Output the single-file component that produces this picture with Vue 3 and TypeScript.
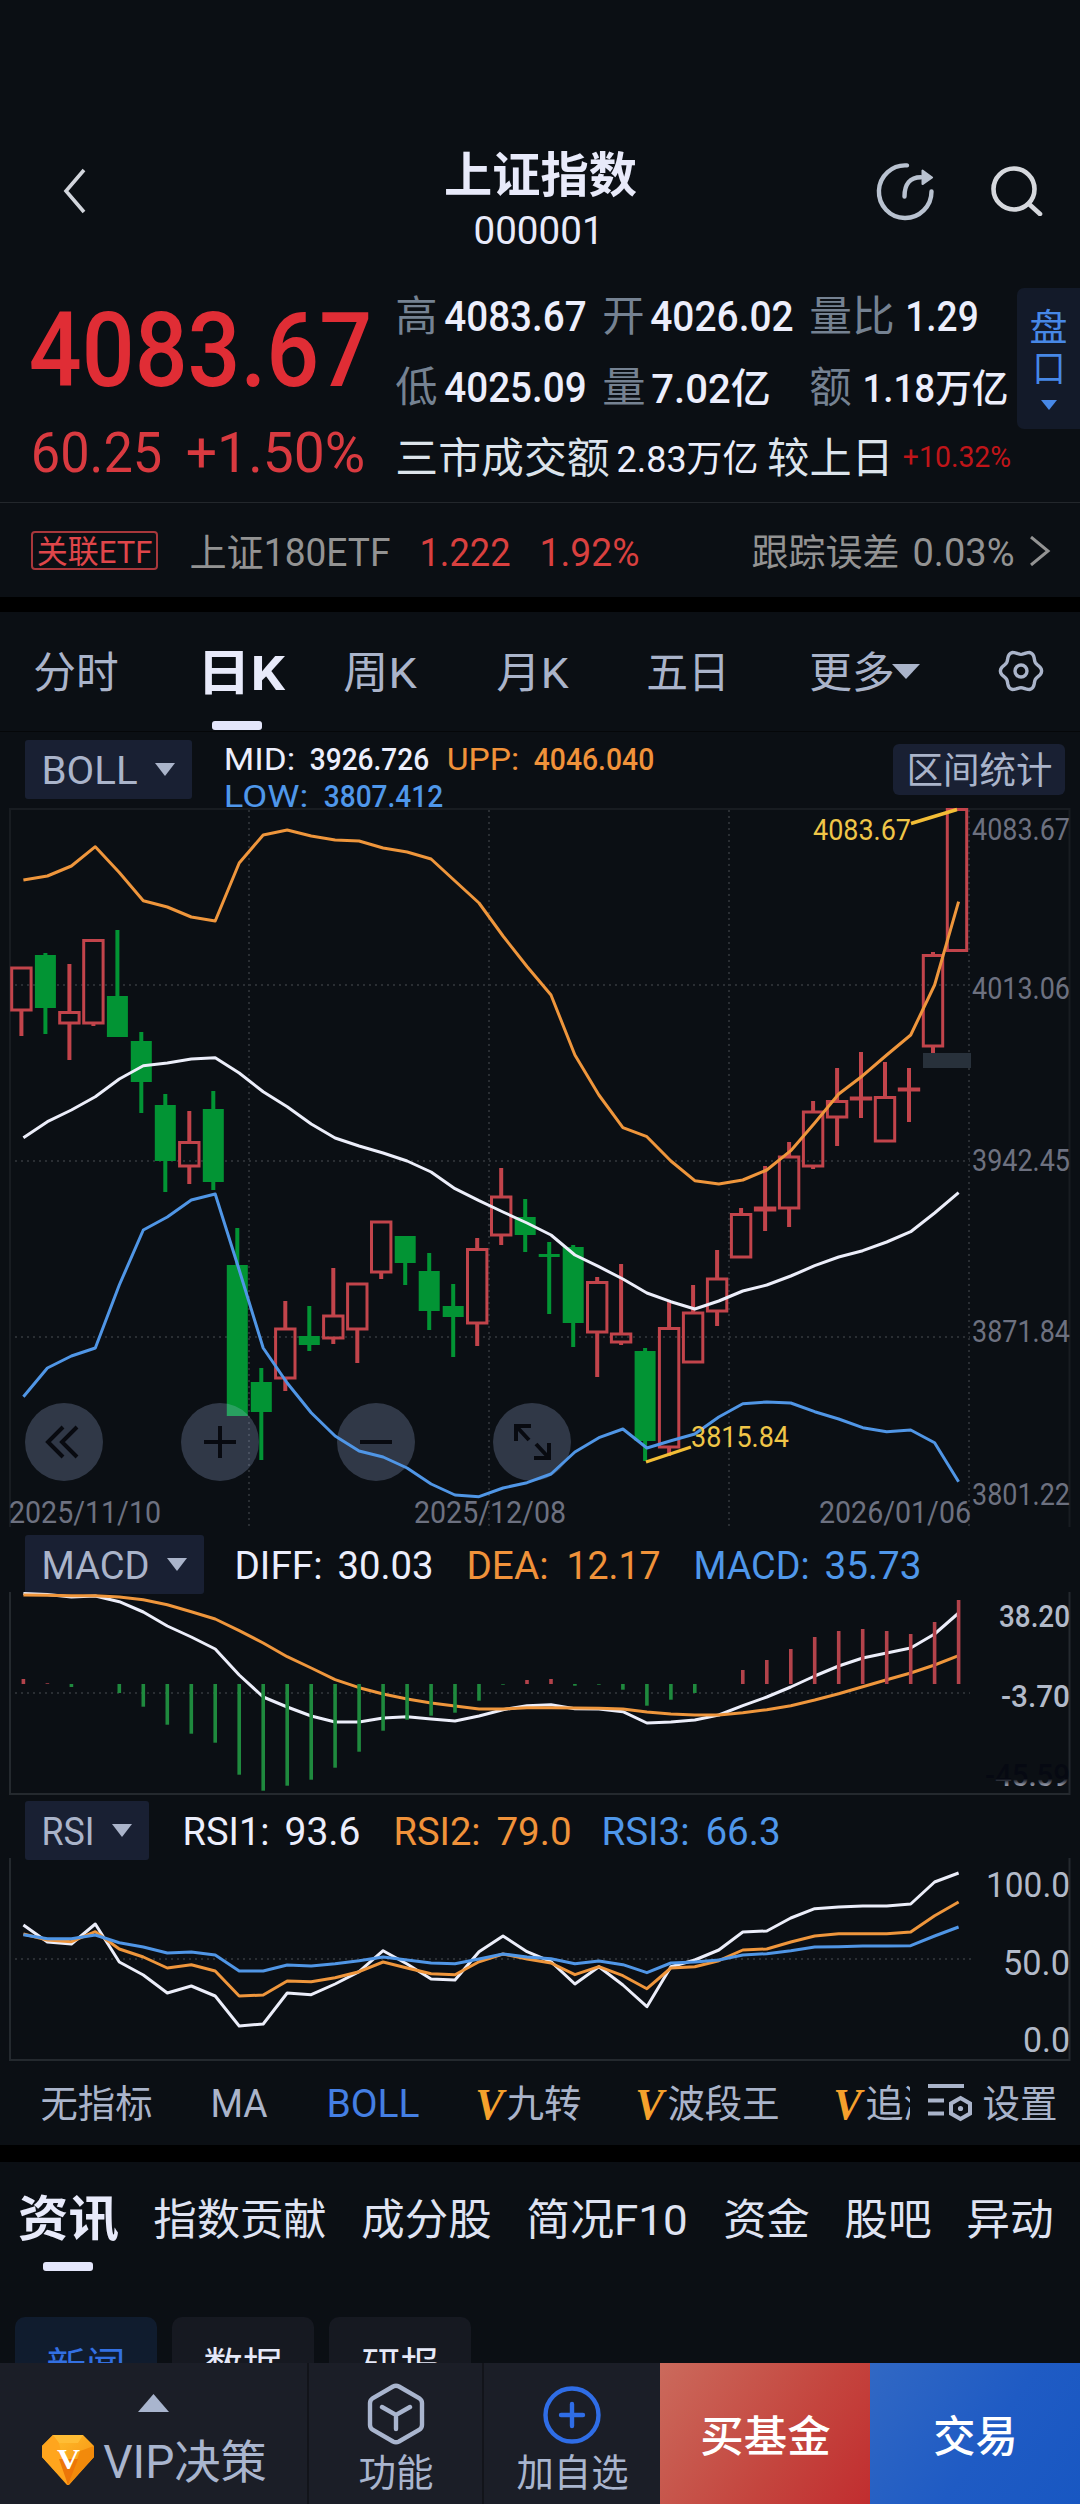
<script setup lang="ts">
import { h } from 'vue'

interface FitProps {
  t: string
  w: number
  s: number
  g?: number
  dy?: number
}

/* A run of text fitted to an exact width; the bottom of its box is the baseline. */
const Fit = (p: FitProps) => {
  const g = Number(p.g ?? 0)
  const w = Number(p.w)
  const s = Number(p.s)
  const height = Math.round(s * 0.8)
  return h('svg', { class: 'fit', width: g + w, height }, [
    h(
      'text',
      {
        x: g - s * 0.04,
        y: height + Number(p.dy ?? 0),
        'font-size': s,
        textLength: w + s * 0.08,
        lengthAdjust: 'spacingAndGlyphs',
        fill: 'currentColor',
      },
      p.t,
    ),
  ])
}
Fit.props = ['t', 'w', 's', 'g', 'dy']

const cx = (i: number) => +(21.4 + 23.99 * i).toFixed(1)
const lx = (i: number) => +(23.4 + 23.98 * i).toFixed(1)
const line = (ys: number[]) => ys.map((y, i) => `${lx(i)},${y}`).join(' ')

type Candle = [up: number, high: number, top: number, bottom: number, low: number]
const candles: Candle[] = [
  [1, 968, 968, 1010, 1036], [0, 953, 955, 1008, 1034], [1, 964, 1012.5, 1023, 1060], [1, 940, 940.5, 1023, 1026],
  [0, 930, 996, 1037, 1037], [0, 1032, 1041, 1082, 1113], [0, 1094, 1105, 1161, 1192], [1, 1111, 1142.5, 1166, 1184],
  [0, 1091, 1109, 1182, 1190], [0, 1228, 1265, 1416, 1416], [0, 1368, 1382, 1412, 1460], [1, 1301, 1329, 1378, 1391],
  [0, 1306, 1336, 1345, 1351], [1, 1268, 1316, 1338, 1344], [1, 1284, 1284, 1329, 1363], [1, 1222, 1222, 1272, 1279],
  [0, 1236, 1236, 1263, 1285], [0, 1253, 1271, 1311, 1330], [0, 1284, 1306, 1317, 1357], [1, 1238, 1249.5, 1323, 1346],
  [1, 1168, 1197, 1235, 1245], [0, 1199, 1217, 1235, 1252], [0, 1242, 1254, 1257, 1314], [0, 1245, 1247, 1323, 1347],
  [1, 1277, 1282.5, 1332, 1377], [1, 1264, 1334, 1342, 1345], [0, 1348, 1351, 1441, 1461], [1, 1300, 1328.5, 1447, 1456],
  [1, 1285, 1313, 1362, 1362], [1, 1250, 1279, 1311, 1326], [1, 1208, 1214.5, 1257, 1257], [1, 1166, 1208, 1210, 1231],
  [1, 1142, 1157, 1208, 1227], [1, 1101, 1112, 1166, 1169], [1, 1068, 1101.5, 1117, 1146], [1, 1052, 1098, 1099, 1118],
  [1, 1062, 1097.5, 1141, 1141], [1, 1068, 1089, 1090, 1122], [1, 952, 955.5, 1046, 1053], [1, 809, 809.5, 950.5, 951],
]

const upp = line([
  880, 876, 866, 846.7, 872.5, 900.7, 907, 917, 921, 863, 835, 830, 836, 840, 841, 848, 852, 859, 881, 903,
  936, 966.5, 995, 1055, 1095, 1127.7, 1136.7, 1161, 1180.7, 1184, 1180, 1170, 1150.7, 1123, 1094, 1075.7, 1055, 1035, 985, 901.7,
])
const mid = line([
  1137.7, 1121.7, 1110, 1096.7, 1079, 1065.7, 1063, 1059, 1057.7, 1073, 1091.7, 1106.7, 1124, 1138, 1146, 1153, 1161, 1172, 1188.7, 1200.7,
  1212, 1223, 1235, 1255, 1266.7, 1279, 1293, 1301.7, 1309, 1301, 1291, 1285, 1276, 1265.7, 1257, 1250.7, 1242, 1231.7, 1213, 1192.7,
])
const low = line([
  1396.7, 1368, 1356, 1348, 1285, 1230, 1217, 1200, 1194, 1270, 1348, 1383, 1412.7, 1436, 1451, 1457, 1468, 1484, 1495, 1496.7,
  1488, 1482.7, 1474, 1452, 1437.7, 1429, 1448, 1440.7, 1434, 1417, 1403.7, 1402, 1403, 1411.7, 1419, 1427.7, 1431.7, 1430, 1442.7, 1481.7,
])
const diff = line([
  1593.5, 1594.5, 1597, 1596, 1601.7, 1612, 1626, 1637, 1649, 1675, 1697, 1707, 1716, 1722, 1722, 1718, 1716.7, 1719, 1721, 1716,
  1709.7, 1705.7, 1704.7, 1708.7, 1709, 1711.7, 1723, 1722, 1720, 1715, 1705.7, 1697, 1687, 1676, 1666, 1658, 1653, 1648, 1634, 1613,
])
const dea = line([
  1595, 1595.3, 1595.7, 1595.7, 1597, 1599.7, 1604.7, 1611.7, 1619, 1630.7, 1643, 1656.7, 1668, 1679.7, 1687.7, 1694, 1699, 1703, 1706, 1709,
  1709, 1707.7, 1707.7, 1708, 1708.3, 1709, 1712, 1714, 1715, 1715, 1712.7, 1709.7, 1705.7, 1700, 1693.7, 1686.7, 1679.7, 1673, 1665, 1655.7,
])
const rsi1 = line([
  1925, 1942, 1944, 1924, 1962, 1975, 1993, 1986, 1996, 2026, 2024, 1993, 1994.7, 1984, 1971.7, 1950.7, 1964, 1979, 1980, 1951.7,
  1936, 1951.7, 1961.7, 1984, 1966.7, 1985, 2006.7, 1966.7, 1960, 1950, 1932, 1931, 1918, 1908.7, 1907, 1906, 1906, 1904, 1882, 1873,
])
const rsi2 = line([
  1934, 1940, 1941.7, 1931.7, 1949, 1957, 1968, 1964.7, 1971, 1996, 1995, 1981, 1981.7, 1977.7, 1971.7, 1962, 1968, 1973.7, 1974.7, 1961.7,
  1954, 1959, 1963, 1974.7, 1966.7, 1975.7, 1988.7, 1968, 1966.7, 1960.7, 1950, 1949, 1942, 1936, 1933.7, 1933.7, 1933.7, 1932, 1915.7, 1902,
])
const rsi3 = line([
  1934.7, 1938.7, 1938.7, 1935, 1942.7, 1947, 1953, 1952, 1955, 1971, 1971, 1965, 1966, 1963.7, 1960.7, 1957, 1960, 1963, 1963.7, 1959,
  1954, 1957, 1958.7, 1963.7, 1961, 1964.7, 1972.7, 1963, 1962, 1960, 1955, 1953.7, 1950.7, 1947, 1946.7, 1946, 1946, 1945.7, 1936, 1927,
])

const zero = 1684
const bars = [
  1679, 1683.3, 1687, 1684, 1693, 1706.7, 1724.7, 1733.7, 1742.7, 1774.7, 1790.7, 1785.7, 1779.7, 1767.7, 1751.7, 1730.7, 1719.7, 1715.7, 1712.7, 1700.7,
  1684.7, 1680, 1679, 1685.7, 1684.7, 1689.7, 1705.7, 1699.7, 1693, 1684, 1670, 1660, 1649, 1637, 1631, 1629, 1631, 1634, 1622, 1600,
]

const scale = [
  { t: '4083.67', y: 840 },
  { t: '4013.06', y: 999 },
  { t: '3942.45', y: 1170.5 },
  { t: '3871.84', y: 1341.5 },
  { t: '3801.22', y: 1505 },
]
const dates = [
  { t: '2025/11/10', x: 9 },
  { t: '2025/12/08', x: 414 },
  { t: '2026/01/06', x: 819 },
]
const news = [
  { t: '指数贡献', w: 170, g: 38 },
  { t: '成分股', w: 127, g: 38 },
  { t: '简况F10', w: 158, g: 38 },
  { t: '资金', w: 83, g: 39 },
  { t: '股吧', w: 84, g: 38 },
  { t: '异动', w: 84, g: 38 },
]
const gear =
  Array.from({ length: 72 }, (_, i) => {
    const a = (i * Math.PI) / 36
    const r = 18.6 + 2 * Math.cos(6 * a)
    return `${i ? 'L' : 'M'}${(23 + r * Math.cos(a)).toFixed(2)} ${(23 + r * Math.sin(a)).toFixed(2)}`
  }).join('') + 'Z'
</script>

<template>
  <main class="page">
    <header class="top">
      <svg class="back" width="30" height="50" viewBox="0 0 30 50"><path d="M22 4 4 25 22 46" /></svg>
      <div class="title">
        <div class="line t1"><Fit t="上证指数" :w="189" :s="48" /></div>
        <div class="line t2"><Fit t="000001" :w="127" :s="39" :dy="1" /></div>
      </div>
      <svg class="share" width="60" height="60" viewBox="0 0 60 60">
        <path class="ring" d="M31 3.4A26.3 26.3 0 1 0 55.5 29.5" />
        <path class="ring" d="M28.5 34.5C28.5 22 34 15.2 45 15.2" />
        <path class="head" d="M46.5 8.5v13.6l9.6-6.6z" />
      </svg>
      <svg class="search" width="54" height="50" viewBox="0 0 54 50"><circle cx="24" cy="23" r="20.5" /><path d="m39 38 11 10" /></svg>
    </header>

    <section class="quote">
      <div class="price">
        <div class="line p1"><Fit t="4083.67" :w="335" :s="104" :dy="-1" /></div>
        <div class="line p2"><Fit t="60.25" :w="127" :s="56" /><Fit t="+1.50%" :w="175" :s="56" :g="28" /></div>
      </div>
      <div class="stats">
        <div class="line s1">
          <Fit class="k" t="高" :w="39" :s="42" /><Fit class="v" t="4083.67" :w="139" :s="43" :g="10" />
          <Fit class="k" t="开" :w="39" :s="42" :g="19" /><Fit class="v" t="4026.02" :w="140" :s="43" :g="9" />
          <Fit class="k" t="量比" :w="82" :s="42" :g="19" /><Fit class="v" t="1.29" :w="70" :s="43" :g="14" />
        </div>
        <div class="line s2">
          <Fit class="k" t="低" :w="39" :s="42" /><Fit class="v" t="4025.09" :w="139" :s="43" :g="10" />
          <Fit class="k" t="量" :w="40" :s="42" :g="19" /><Fit class="v" t="7.02亿" :w="116" :s="41" :g="9" :dy="1" />
          <Fit class="k" t="额" :w="39" :s="42" :g="42" /><Fit class="v" t="1.18万亿" :w="143" :s="39" :g="14" />
        </div>
        <div class="line s3">
          <Fit t="三市成交额" :w="211" :s="42" :dy="1" /><Fit class="v" t="2.83万亿" :w="139" :s="37" :g="10" />
          <Fit t="较上日" :w="123" :s="42" :g="12" :dy="1" /><Fit class="rise" t="+10.32%" :w="106" :s="29" :g="12" :dy="-5" />
        </div>
      </div>
      <aside class="side">
        <Fit t="盘" :w="35" :s="37" /><Fit t="口" :w="30" :s="37" />
        <svg width="16" height="10" viewBox="0 0 16 10"><path d="M0 0h16L8 10z" /></svg>
      </aside>
    </section>

    <section class="etf">
      <span class="badge"><Fit t="关联ETF" :w="113" :s="32" /></span>
      <Fit t="上证180ETF" :w="198" :s="38" /><Fit class="up" t="1.222" :w="88" :s="38" :g="32" /><Fit class="up" t="1.92%" :w="97" :s="38" :g="32" />
      <Fit class="right" t="跟踪误差" :w="145" :s="37" /><Fit t="0.03%" :w="99" :s="38" :g="16" />
      <svg class="go" width="22" height="30" viewBox="0 0 22 30"><path d="m2 1 17 14L2 29" /></svg>
    </section>
    <div class="band b1"></div>

    <nav class="periods">
      <Fit t="分时" :w="82" :s="43" />
      <div class="on"><Fit t="日K" :w="84" :s="49" :dy="2" /></div>
      <Fit t="周K" :w="70" :s="43" :g="62" /><Fit t="月K" :w="69" :s="43" :g="83" /><Fit t="五日" :w="80" :s="43" :g="81" />
      <Fit t="更多" :w="82" :s="43" :g="83" />
      <svg class="more" width="28" height="15" viewBox="0 0 28 15"><path d="M0 0h28L14 15z" /></svg>
      <svg class="gear" width="46" height="46" viewBox="0 0 46 46"><path :d="gear" /><circle cx="23" cy="23" r="6" /></svg>
    </nav>

    <div class="tools">
      <span class="drop boll"><Fit t="BOLL" :w="93" :s="39" /><i></i></span>
      <div class="legend">
        <div class="line l1">
          <Fit t="MID:" :w="69" :s="31" /><Fit class="num" t="3926.726" :w="117" :s="31" :g="17" />
          <Fit class="orange" t="UPP:" :w="70" :s="31" :g="20" /><Fit class="orange num" t="4046.040" :w="118" :s="31" :g="17" />
        </div>
        <div class="line l2 blue"><Fit t="LOW:" :w="82" :s="31" /><Fit class="num" t="3807.412" :w="117" :s="31" :g="18" /></div>
      </div>
      <span class="range"><Fit t="区间统计" :w="143" :s="37" /></span>
    </div>

    <svg class="chart" width="1080" height="722" viewBox="0 808 1080 722">
      <path class="frame" d="M10 1527V809H1069.5V1527" />
      <path class="grid" d="M15 985H970M15 1161H970M15 1337H970M249 810V1527M489 810V1527M729 810V1527M969 810V1527" />
      <rect x="923" y="1053" width="48" height="15" fill="#28313b" />
      <g class="axis">
        <text v-for="d in dates" :key="d.t" :x="d.x" y="1523" textLength="152" lengthAdjust="spacingAndGlyphs">{{ d.t }}</text>
        <text v-for="s in scale" :key="s.t" x="972" :y="s.y" textLength="98" lengthAdjust="spacingAndGlyphs">{{ s.t }}</text>
      </g>
      <g v-for="(c, i) in candles" :key="i" :class="c[0] ? 'r' : 'g'">
        <rect class="wick" :x="cx(i) - 2" :y="c[1]" width="4" :height="Math.max(0, c[2] - c[1])" />
        <rect class="wick" :x="cx(i) - 2" :y="c[3]" width="4" :height="Math.max(0, c[4] - c[3])" />
        <rect v-if="c[0]" class="body" :x="cx(i) - 9.7" :y="c[2]" width="19.4" :height="c[3] - c[2]" />
        <rect v-else class="body" :x="cx(i) - 10.5" :y="c[2]" width="21" :height="c[3] - c[2]" />
      </g>
      <g class="buttons">
        <circle v-for="x in [64, 220, 376, 532]" :key="x" :cx="x" cy="1442" r="39" />
      </g>
      <g class="plot">
        <polyline class="o" :points="upp" /><polyline class="w" :points="mid" /><polyline class="b" :points="low" />
      </g>
      <g class="glyph">
        <path d="M63 1427 48 1442 63 1457M77 1427 62 1442 77 1457M204 1442H236M220 1426V1458M360 1442H392" />
        <path d="M516 1441V1426H531M516 1426 529 1440M549 1443V1458H534M549 1458 536 1444" />
      </g>
      <g class="mark">
        <path d="M911 823.5 957 809.5M646 1462 691 1447" />
        <text x="813" y="840" textLength="98" lengthAdjust="spacingAndGlyphs">4083.67</text>
        <text x="691" y="1447" textLength="98" lengthAdjust="spacingAndGlyphs">3815.84</text>
      </g>
    </svg>

    <div class="bar macd">
      <span class="drop"><Fit t="MACD" :w="105" :s="39" /><i></i></span>
      <div class="vals">
        <Fit t="DIFF:" :w="85" :s="39" /><Fit t="30.03" :w="93" :s="39" :g="18" />
        <Fit class="orange" t="DEA:" :w="79" :s="39" :g="36" /><Fit class="orange" t="12.17" :w="91" :s="39" :g="21" />
        <Fit class="blue" t="MACD:" :w="113" :s="39" :g="36" /><Fit class="blue" t="35.73" :w="94" :s="39" :g="18" />
      </div>
    </div>
    <svg class="chart" width="1080" height="204" viewBox="0 1592 1080 204">
      <defs>
        <linearGradient id="fade" x1="0" y1="0" x2="0" y2="1">
          <stop offset="0.6" stop-color="#060912" /><stop offset="0.76" stop-color="#8d92a0" />
        </linearGradient>
      </defs>
      <path class="frame strong" d="M10 1592V1794H1069.5V1592" />
      <path class="grid" d="M15 1693H970" />
      <g class="plot"><polyline class="w" :points="diff" /><polyline class="o" :points="dea" /></g>
      <rect
        v-for="(y, i) in bars" :key="i" :x="lx(i) - 1.8" :y="Math.min(y, zero)" width="3.6" :height="Math.abs(y - zero)"
        :fill="y < zero ? '#b3434b' : '#1f8a3e'"
      />
      <g class="axis light">
        <text x="999" y="1627" textLength="71" lengthAdjust="spacingAndGlyphs">38.20</text>
        <text x="1001" y="1707" textLength="69" lengthAdjust="spacingAndGlyphs">-3.70</text>
        <text class="faded" x="985" y="1786" textLength="85" lengthAdjust="spacingAndGlyphs">-45.59</text>
      </g>
    </svg>

    <div class="bar rsi">
      <span class="drop"><Fit t="RSI" :w="50" :s="39" /><i></i></span>
      <div class="vals">
        <Fit t="RSI1:" :w="84" :s="39" /><Fit t="93.6" :w="73" :s="39" :g="18" />
        <Fit class="orange" t="RSI2:" :w="84" :s="39" :g="36" /><Fit class="orange" t="79.0" :w="72" :s="39" :g="19" />
        <Fit class="blue" t="RSI3:" :w="85" :s="39" :g="33" /><Fit class="blue" t="66.3" :w="72" :s="39" :g="19" />
      </div>
    </div>
    <svg class="chart" width="1080" height="204" viewBox="0 1858 1080 204">
      <path class="frame strong" d="M10 1858V2060H1069.5V1858" />
      <path class="grid" d="M15 1959H972" />
      <g class="plot"><polyline class="w" :points="rsi1" /><polyline class="o" :points="rsi2" /><polyline class="b" :points="rsi3" /></g>
      <g class="axis light big">
        <text x="986" y="1897" textLength="84" lengthAdjust="spacingAndGlyphs">100.0</text>
        <text x="1003" y="1975" textLength="67" lengthAdjust="spacingAndGlyphs">50.0</text>
        <text x="1023" y="2052" textLength="47" lengthAdjust="spacingAndGlyphs">0.0</text>
      </g>
    </svg>

    <nav class="picker">
      <div class="scroll">
        <Fit t="无指标" :w="109" :s="38" /><Fit t="MA" :w="54" :s="39" :g="61" /><Fit class="sel" t="BOLL" :w="90" :s="39" :g="62" />
        <Fit class="vip" t="V" :w="25" :s="44" :g="59" :dy="2" /><Fit t="九转" :w="72" :s="38" :g="6" />
        <Fit class="vip" t="V" :w="25" :s="44" :g="57" :dy="2" /><Fit t="波段王" :w="109" :s="38" :g="7" />
        <Fit class="vip" t="V" :w="25" :s="44" :g="57" :dy="2" /><Fit t="追涨" :w="73" :s="38" :g="7" />
      </div>
      <svg class="set" width="46" height="40" viewBox="0 0 46 40">
        <path d="M1 4H37M1 18.500H17M1 31.500H17" /><path d="M33.500 16 43 21.500V31.500L33.500 37 24 31.500V21.500Z" /><circle cx="33.500" cy="26.500" r="2.600" />
      </svg>
      <Fit t="设置" :w="72" :s="38" />
    </nav>
    <div class="band b2"></div>

    <nav class="news">
      <div class="on"><Fit t="资讯" :w="97" :s="49" :dy="2" /></div>
      <Fit v-for="n in news" :key="n.t" :t="n.t" :w="n.w" :g="n.g" :s="43" :dy="1" />
    </nav>
    <div class="chips">
      <span class="chip active"><Fit t="新闻" :w="76" :s="39" /></span>
      <span class="chip"><Fit t="数据" :w="76" :s="39" /></span>
      <span class="chip"><Fit t="研报" :w="75" :s="39" /></span>
    </div>

    <footer class="dock">
      <div class="cell vipc">
        <svg class="tri" width="31" height="18" viewBox="0 0 31 18"><path d="M15.500 0 31 18H0z" /></svg>
        <div class="viprow">
          <svg width="52" height="50" viewBox="0 0 52 50">
            <defs>
              <linearGradient id="gem" x1="0" y1="0" x2="1" y2="1"><stop offset="0" stop-color="#ffc32f" /><stop offset="1" stop-color="#f78a0c" /></linearGradient>
            </defs>
            <path d="M11 0H41L52 11V22L27 50H25L0 22V11Z" fill="url(#gem)" />
            <path d="M11 0H41L36 8H17Z" fill="#ffbd35" /><path d="M17 8 26 50 0 22V11L11 0Z" fill="#ffa51d" /><path d="M26 50 38 16 52 11V22Z" fill="#f28a0b" />
            <path d="M26 50 17 24H36Z" fill="#ec7609" />
            <text x="15" y="34" class="gemv" textLength="23" lengthAdjust="spacingAndGlyphs">V</text>
          </svg>
          <Fit t="VIP决策" :w="160" :s="46" />
        </div>
      </div>
      <div class="cell fn">
        <svg width="60" height="62" viewBox="0 0 60 62"><path d="M27 3.500Q30 2 33 3.500L53 15Q56 17 56 20V42Q56 45 53 47L33 58.500Q30 60 27 58.500L7 47Q4 45 4 42V20Q4 17 7 15ZM16 24 30 32 44 24M30 32V46" /></svg>
        <Fit t="功能" :w="72" :s="38" />
      </div>
      <div class="cell add">
        <svg width="60" height="62" viewBox="0 0 60 62"><circle cx="30" cy="32" r="26.500" /><path d="M19 32H41M30 21V43" /></svg>
        <Fit t="加自选" :w="109" :s="38" />
      </div>
      <div class="buy"><Fit t="买基金" :w="127" :s="43" /></div>
      <div class="trade"><Fit t="交易" :w="81" :s="43" /></div>
    </footer>
  </main>
</template>

<style>
html,
body {
  margin: 0;
  background: #0b0f14;
}
.fit {
  display: block;
  flex: none;
  overflow: visible;
}
</style>

<style scoped>
.page {
  width: 1080px;
  height: 2504px;
  overflow: hidden;
  display: flex;
  flex-direction: column;
  background: #0b0f14;
  color: #aab4ca;
  font-family: Roboto, "Noto Sans CJK SC", sans-serif;
}
.page > * {
  flex: none;
  box-sizing: border-box;
}
svg {
  display: block;
  flex: none;
}
.line {
  display: flex;
  align-items: flex-end;
}
.orange { color: #f0923a; }
.blue { color: #4f97ea; }

.top {
  height: 288px;
  display: flex;
  align-items: flex-start;
  padding-left: 62px;
}
.back {
  margin-top: 166px;
  fill: none;
  stroke: #d2d5dc;
  stroke-width: 3.6;
}
.title {
  width: 189px;
  margin-left: 354px;
  color: #e8eafa;
  display: flex;
  flex-direction: column;
  align-items: center;
}
.t1 { height: 192px; font-weight: 700; }
.t2 { height: 51px; margin-right: 4px; }
.share { margin: 162px 0 0 241px; }
.ring { fill: none; stroke: #b9c2d0; stroke-width: 4.4; stroke-linecap: round; }
.head { fill: #b9c2d0; stroke: #b9c2d0; stroke-width: 2; stroke-linejoin: round; }
.search { margin: 166px 0 0 54px; fill: none; stroke: #d6d8dd; stroke-width: 4.6; stroke-linecap: round; }

.quote {
  height: 215px;
  display: flex;
  border-bottom: 1px solid #23272c;
}
.price {
  width: 364px;
  padding-left: 33px;
  color: #e02d35;
}
.p1 { height: 99px; font-weight: 500; }
.p2 { height: 85px; color: #d93a40; }
.stats { width: 620px; color: #dce4ec; }
.s1 { height: 43px; }
.s2 { height: 71px; }
.s3 { height: 70px; }
.k { color: #758292; }
.v { color: #eceefc; font-weight: 500; }
.s3 .v { font-weight: 400; }
.rise { color: #c01519; }
.side {
  width: 63px;
  height: 141px;
  box-sizing: border-box;
  padding: 23px 0 0 0;
  border-radius: 7px 0 0 7px;
  background: #131a29;
  color: #4788e6;
  display: flex;
  flex-direction: column;
  align-items: center;
  gap: 11px;
}
.side svg:last-child { fill: #4788e6; margin-top: 7px; }

.etf {
  height: 94px;
  padding-left: 31px;
  display: flex;
  align-items: flex-end;
  padding-bottom: 31px;
  color: #939393;
}
.badge {
  width: 127px;
  height: 39px;
  box-sizing: border-box;
  border: 2px solid #a8373b;
  border-radius: 4px;
  display: flex;
  align-items: flex-end;
  justify-content: center;
  padding-bottom: 5px;
  margin: 0 33px -4px 0;
  color: #e0464a;
}
.up { color: #d9403f; }
.right { margin-left: 115px; }
.go { margin-left: 16px; fill: none; stroke: #939393; stroke-width: 3; }
.band { background: #000; }
.b1 { height: 15px; }
.b2 { height: 17px; }

.periods {
  height: 120px;
  border-bottom: 1px solid #050709;
  padding: 0 0 43px 35px;
  display: flex;
  align-items: flex-end;
}
.periods .on {
  position: relative;
  margin-left: 82px;
  color: #e8eafa;
  font-weight: 700;
}
.on::after {
  content: '';
  position: absolute;
  left: 13px;
  bottom: -42px;
  width: 50px;
  height: 9px;
  border-radius: 3px;
  background: #e4e6fb;
}
.more { fill: #aab4ca; margin: 0 0 9px -1px; }
.gear { margin: 0 0 -6px 78px; fill: none; stroke: #aab4ca; stroke-width: 3.4; }

.tools {
  height: 76px;
  padding-left: 25px;
  display: flex;
  align-items: flex-start;
}
.drop {
  height: 59px;
  box-sizing: border-box;
  padding: 0 17px 15px 18px;
  display: flex;
  align-items: flex-end;
  gap: 19px;
  background: #192033;
  border-radius: 3px;
}
.drop i {
  border: 10.500px solid transparent;
  border-top: 13px solid #aab4ca;
  border-bottom: 0;
  margin-bottom: 8px;
}
.boll { margin-top: 8px; }
.legend { margin-left: 33px; width: 668px; color: #eceefc; }
.legend.legend .num { font-weight: 500; }
.l1 { height: 38px; }
.l2 { height: 37px; }
.l2.blue { color: #4f97ea; }
.legend .orange { color: #f0923a; }
.range {
  margin-top: 12px;
  width: 172px;
  height: 51px;
  box-sizing: border-box;
  background: #192033;
  border-radius: 6px;
  display: flex;
  align-items: flex-end;
  justify-content: center;
  padding-bottom: 11px;
}

.chart { overflow: visible; }
.frame { fill: none; stroke: #181c21; stroke-width: 2; }
.strong { stroke: #24292e; }
.grid { fill: none; stroke: #2a2e33; stroke-width: 2; stroke-dasharray: 2 4; }
.axis text { font-size: 30.5px; fill: #6d7180; }
.axis.light text { fill: #b2bac9; font-size: 32px; font-weight: 500; }
.axis.big text { font-size: 35px; font-weight: 400; }
.axis.light .faded { fill: url(#fade); }
.r .wick { fill: #c2444b; }
.r .body { fill: none; stroke: #c2444b; stroke-width: 3; }
.g rect { fill: #029434; }
.buttons circle { fill: rgba(180, 205, 255, 0.22); }
.plot polyline { fill: none; stroke-width: 3; stroke-linejoin: round; }
.plot .o { stroke: #ef963c; }
.plot .w { stroke: #eceefa; }
.plot .b { stroke: #5096e6; }
.glyph { fill: none; stroke: #080a10; stroke-width: 4; }
.mark path { fill: none; stroke: #f2bd36; stroke-width: 3.4; }
.mark text { font-size: 30px; fill: #f0c648; }

.bar {
  display: flex;
  align-items: flex-start;
  padding: 5px 0 0 25px;
  height: 62px;
}
.vals {
  height: 44px;
  display: flex;
  align-items: flex-end;
  margin-left: 32px;
  color: #eceefc;
}
.rsi .vals { margin-left: 35px; }
.vals .orange { color: #f0923a; }
.vals .blue { color: #4f97ea; }

.picker {
  height: 83px;
  display: flex;
  align-items: flex-end;
  padding: 0 0 28px 42px;
}
.scroll {
  width: 868px;
  height: 50px;
  margin-bottom: -10px;
  padding-bottom: 10px;
  box-sizing: border-box;
  display: flex;
  align-items: flex-end;
  overflow: hidden;
}
.sel { color: #447fe4; }
.vip { color: #f5a02c; font-family: "Liberation Serif", serif; font-weight: 700; font-style: italic; }
.set { margin: 0 11px -5px 17px; fill: none; stroke: #aab4ca; stroke-width: 4; }
.set circle { fill: #aab4ca; stroke: none; }

.news {
  height: 155px;
  padding: 0 0 83px 20px;
  display: flex;
  align-items: flex-end;
  color: #dfe3f2;
}
.news .on { position: relative; font-weight: 700; color: #e8eafa; }
.news .on::after { left: 23px; bottom: -37px; }
.chips {
  height: 46px;
  padding-left: 15px;
  display: flex;
  gap: 15px;
  overflow: hidden;
}
.chip {
  width: 142px;
  height: 92px;
  box-sizing: border-box;
  padding-top: 32px;
  border-radius: 10px;
  background: #161921;
  color: #e6e9f8;
  display: flex;
  justify-content: center;
}
.chip.active { background: #101c2e; color: #3370e2; }

.dock {
  height: 141px;
  background: #1b1e27;
  display: flex;
  color: #a9b5ce;
}
.cell {
  box-sizing: border-box;
  height: 141px;
  display: flex;
  flex-direction: column;
  align-items: center;
}
.vipc { width: 307px; }
.tri { margin-top: 31px; fill: #a9b5ce; }
.viprow {
  display: flex;
  align-items: flex-end;
  gap: 11px;
  margin-top: 23px;
}
.viprow .fit { margin-bottom: 7px; }
.gemv { font: 700 30px "Liberation Serif", serif; fill: #fff; }
.fn {
  width: 175px;
  padding-top: 20px;
  border-left: 2px solid #12141a;
}
.add {
  width: 178px;
  padding-top: 20px;
  border-left: 2px solid #12141a;
}
.fn svg:first-child,
.add svg:first-child { fill: none; stroke: #a9b5ce; stroke-width: 4.4; stroke-linecap: round; }
.add svg:first-child { stroke: #2f6de6; }
.fn .fit,
.add .fit { margin-top: 11px; }
.buy,
.trade {
  width: 210px;
  height: 141px;
  display: flex;
  align-items: center;
  justify-content: center;
  color: #fff;
  font-weight: 500;
}
.buy { background: linear-gradient(125deg, #cb6a5c, #c4453e 60%, #c12d2f); }
.trade { background: linear-gradient(125deg, #3168c4, #1f5bc4 55%, #1857c2); }
.buy .fit,
.trade .fit { margin-top: 2px; }
</style>
